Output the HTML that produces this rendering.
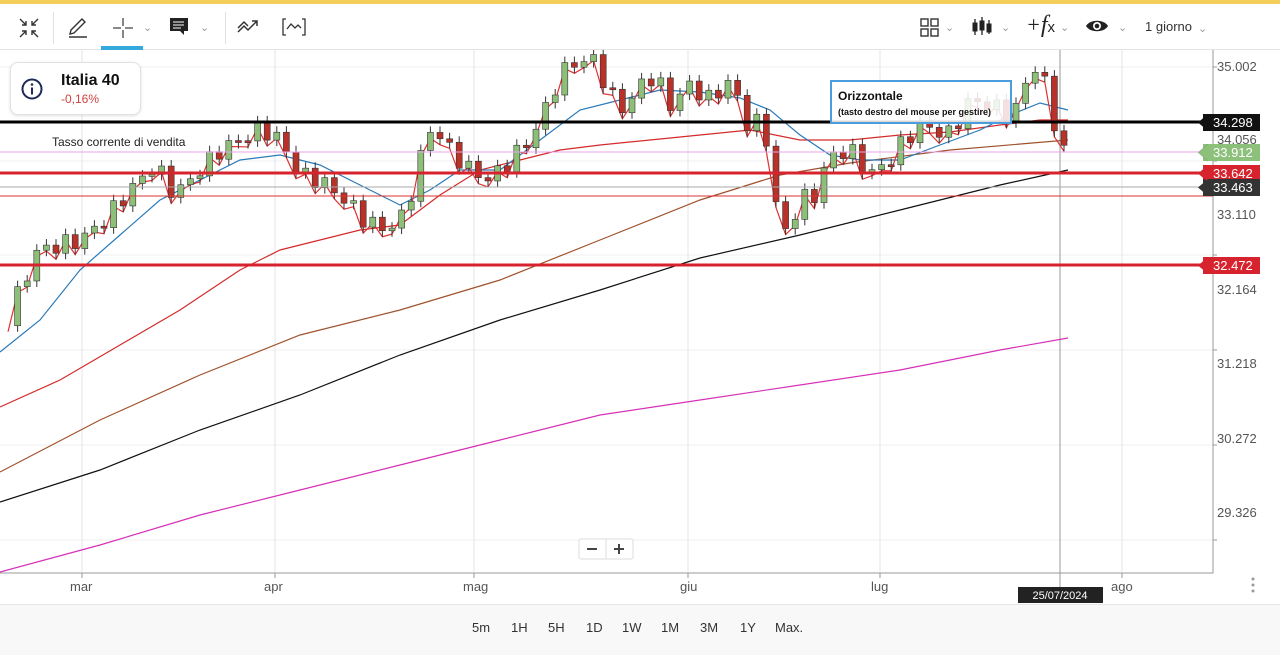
<!DOCTYPE html>
<html><head><meta charset="utf-8"><style>
body{margin:0;width:1280px;height:654px;overflow:hidden;background:#fff;font-family:"Liberation Sans",sans-serif;position:relative}
.top{position:absolute;left:0;top:0;width:1280px;height:4px;background:#f3cf5a}
.tb{position:absolute;top:4px;left:0;width:1280px;height:45px;border-bottom:1px solid #e4e4e4}
.abs{position:absolute}
.chev{position:absolute;color:#999;font-size:11px}
.card{position:absolute;left:10px;top:62px;width:129px;height:51px;border:1px solid #e2e2e2;border-radius:8px;background:#fff;box-shadow:0 1px 3px rgba(0,0,0,.12)}
.tag{position:absolute;right:20px;height:17px;color:#fff;font-size:13px;line-height:17px;padding-left:10px;width:47px}
.bot{position:absolute;top:604px;left:0;width:1280px;height:50px;background:#f8f8f8;border-top:1px solid #e6e6e6}
.bot span{position:absolute;top:15px;font-size:13px;color:#333}
</style></head><body>
<div class="top"></div>
<div class="tb">
<svg class="abs" style="left:18px;top:13px" width="22" height="22" viewBox="0 0 22 22" fill="none" stroke="#333" stroke-width="1.4"><path d="M2 2l6 6M8 4v4H4M20 2l-6 6M14 4v4h4M2 20l6-6M4 14h4v4M20 20l-6-6M18 14h-4v4"/></svg>
<div class="abs" style="left:53px;top:8px;width:1px;height:32px;background:#e0e0e0"></div>
<svg class="abs" style="left:67px;top:13px" width="22" height="22" viewBox="0 0 22 22" fill="none" stroke="#333" stroke-width="1.4"><path d="M3 17l1-4L15 2l3 3L7 16zM2 20h18"/></svg>
<svg class="abs" style="left:112px;top:13px" width="22" height="22" viewBox="0 0 22 22" stroke="#444" stroke-width="1.3"><path d="M11 1v8M11 13v8M1 11h8M13 11h8"/></svg>
<span class="chev" style="left:143px;top:17px">⌄</span>
<div class="abs" style="left:101px;top:42px;width:42px;height:4px;background:#36a9dc"></div>
<svg class="abs" style="left:170px;top:14px" width="20" height="18" viewBox="0 0 20 18"><path d="M0 0h18v13H14v4l-4-4H0z" fill="#222"/><path d="M3 4h11M3 7h11M3 10h8" stroke="#fff" stroke-width="1"/></svg>
<span class="chev" style="left:200px;top:17px">⌄</span>
<div class="abs" style="left:225px;top:8px;width:1px;height:32px;background:#e0e0e0"></div>
<svg class="abs" style="left:237px;top:15px" width="22" height="16" viewBox="0 0 22 16" fill="none" stroke="#333" stroke-width="1.5"><path d="M1 13l6-6 4 4 9-9M15 2h5v5M1 9l6-6 4 4"/></svg>
<svg class="abs" style="left:282px;top:13px" width="24" height="20" viewBox="0 0 24 20" fill="none" stroke="#333" stroke-width="1.3"><path d="M4 2H1v16h3M20 2h3v16h-3M5 12l4-5 4 4 3-3 3 3"/></svg>
<svg class="abs" style="left:920px;top:14px" width="20" height="20" viewBox="0 0 20 20" fill="none" stroke="#333" stroke-width="1.4"><rect x="1" y="1" width="7" height="7"/><rect x="11" y="1" width="7" height="7"/><rect x="1" y="11" width="7" height="7"/><rect x="11" y="11" width="7" height="7"/></svg>
<span class="chev" style="left:945px;top:17px">⌄</span>
<svg class="abs" style="left:972px;top:12px" width="22" height="22" viewBox="0 0 22 22" stroke="#222" fill="#222"><path d="M3 3v16M10 1v18M17 4v14" stroke-width="1.3"/><rect x="1" y="7" width="4" height="8"/><rect x="8" y="5" width="4" height="9"/><rect x="15" y="8" width="4" height="8"/></svg>
<span class="chev" style="left:1001px;top:17px">⌄</span>
<span class="abs" style="left:1026px;top:8px;font-family:'Liberation Serif',serif;font-style:italic;font-size:22px;color:#222">+<span style="font-size:24px">f</span><span style="font-style:normal;font-family:'Liberation Sans';font-size:15px">x</span></span>
<span class="chev" style="left:1060px;top:17px">⌄</span>
<svg class="abs" style="left:1085px;top:14px" width="24" height="16" viewBox="0 0 24 16"><path d="M1 8C5 1 19 1 23 8C19 15 5 15 1 8z" fill="#222"/><circle cx="12" cy="8" r="4" fill="#fff"/><circle cx="12" cy="8" r="2.3" fill="#222"/></svg>
<span class="chev" style="left:1118px;top:17px">⌄</span>
<span class="abs" style="left:1145px;top:15px;font-size:13px;color:#333">1 giorno</span>
<span class="chev" style="left:1198px;top:18px">⌄</span>
</div>

<svg class="abs" style="left:0;top:50px" width="1280" height="554" id="ch">
<g stroke="#efefef" stroke-width="1">
<path d="M0 17H1213M0 111H1213M0 205H1213M0 300H1213M0 395H1213M0 490H1213"/>
<path d="M82 0V522M275 0V522M474 0V522M688 0V522M880 0V522M1122 0V522" stroke="#e6e6e6"/>
</g>
<path d="M1213 0V523H0" stroke="#999" fill="none"/>
<g stroke="#999"><path d="M82 523v5M275 523v5M474 523v5M688 523v5M880 523v5M1122 523v5M1213 17h4M1213 111h4M1213 205h4M1213 300h4M1213 395h4M1213 490h4"/></g>
<path d="M1060 0V550" stroke="#999"/>
<g id="ma" fill="none" stroke-width="1.2"></g>
<g id="cd"></g>
<path d="M0 102H1213" stroke="#e9a4e9" stroke-width="1"/>
<path d="M0 137H1213" stroke="#aaa" stroke-width="1"/>
<path d="M0 146H1213" stroke="#d33" stroke-width="1"/>
<path d="M0 72H1213" stroke="#000" stroke-width="3"/>
<path d="M0 123H1213" stroke="#d7232e" stroke-width="3"/>
<path d="M0 215H1213" stroke="#d7232e" stroke-width="3"/>
<text x="52" y="96" font-size="12" fill="#222" font-family="Liberation Sans">Tasso corrente di vendita</text>
<rect x="831" y="31" width="180" height="42" fill="rgba(255,255,255,.85)" stroke="#4a9ee0" stroke-width="2"/>
<text x="838" y="50" font-size="12" font-weight="bold" fill="#111" font-family="Liberation Sans">Orizzontale</text>
<text x="838" y="65" font-size="9" font-weight="bold" fill="#111" font-family="Liberation Sans">(tasto destro del mouse per gestire)</text>
<g font-family="Liberation Sans" font-size="13" fill="#555">
<text x="1217" y="21">35.002</text><text x="1217" y="94">34.056</text><text x="1217" y="169">33.110</text><text x="1217" y="244">32.164</text><text x="1217" y="318">31.218</text><text x="1217" y="393">30.272</text><text x="1217" y="467">29.326</text>
<text x="70" y="541">mar</text><text x="264" y="541">apr</text><text x="463" y="541">mag</text><text x="680" y="541">giu</text><text x="871" y="541">lug</text><text x="1111" y="541">ago</text>
</g>
<rect x="1018" y="537" width="85" height="16" fill="#222"/>
<text x="1060" y="549" font-size="11" fill="#fff" text-anchor="middle" font-family="Liberation Sans">25/07/2024</text>
<g fill="#999"><circle cx="1253" cy="529" r="1.5"/><circle cx="1253" cy="535" r="1.5"/><circle cx="1253" cy="541" r="1.5"/></g>
<rect x="579" y="489" width="54" height="20" rx="2" fill="#fff" stroke="#ddd"/>
<path d="M606 489v20" stroke="#ddd"/>
<path d="M587 499h10M614 499h10M619 494v10" stroke="#444" stroke-width="2"/>
</svg>

<div class="tag" style="top:114px;background:#111">34.298</div>
<div class="tag" style="top:144px;background:#8dc07b">33.912</div>
<div class="tag" style="top:165px;background:#d7232e">33.642</div>
<div class="tag" style="top:179px;background:#333">33.463</div>
<div class="tag" style="top:257px;background:#d7232e">32.472</div>
<svg class="abs" style="left:1196px;top:114px" width="12" height="160"><path d="M12 0L2 8.5 12 17zM12 30L2 38.5 12 47z" fill="#111"/><path d="M12 30L2 38.5 12 47z" fill="#8dc07b"/><path d="M12 51L2 59.5 12 68z" fill="#d7232e"/><path d="M12 65L2 73.5 12 82z" fill="#333"/><path d="M12 143L2 151.5 12 160z" fill="#d7232e"/></svg>

<div class="card">
<svg class="abs" style="left:10px;top:15px" width="22" height="22" viewBox="0 0 22 22"><circle cx="11" cy="11" r="9.5" fill="none" stroke="#1c2a5c" stroke-width="2"/><circle cx="11" cy="6.5" r="1.3" fill="#1c2a5c"/><path d="M11 9.5v7" stroke="#1c2a5c" stroke-width="2"/></svg>
<div class="abs" style="left:50px;top:9px;font-size:16px;font-weight:bold;color:#111">Italia 40</div>
<div class="abs" style="left:50px;top:29px;font-size:12px;color:#d0413b">-0,16%</div>
</div>

<div class="bot">
<span style="left:472px">5m</span><span style="left:511px">1H</span><span style="left:548px">5H</span><span style="left:586px">1D</span><span style="left:622px">1W</span><span style="left:661px">1M</span><span style="left:700px">3M</span><span style="left:740px">1Y</span><span style="left:775px">Max.</span>
</div>
<script>
const ns="http://www.w3.org/2000/svg",O=-50;
function pl(pts,c,w){const p=document.createElementNS(ns,"polyline");p.setAttribute("points",pts.map(a=>a[0]+","+(a[1]+O)).join(" "));p.setAttribute("stroke",c);p.setAttribute("stroke-width",w||1.2);document.getElementById("ma").appendChild(p);}
pl([[0,572],[100,545],[200,515],[300,490],[400,465],[500,440],[600,415],[700,400],[800,385],[900,370],[1000,350],[1068,338]],"#d630b8");
pl([[0,502],[100,470],[200,430],[300,395],[400,355],[500,320],[600,290],[700,258],[800,235],[900,210],[1000,185],[1068,170]],"#111");
pl([[0,472],[100,420],[200,375],[300,335],[400,310],[500,280],[600,240],[700,200],[780,175],[850,163],[950,150],[1068,140]],"#a0522d");
pl([[0,407],[60,380],[120,345],[180,310],[240,270],[280,250],[320,240],[360,230],[400,225],[440,195],[480,170],[520,160],[560,150],[600,145],[650,140],[700,135],[750,130],[800,140],[850,140],[900,135],[950,132],[1000,125],[1040,120],[1068,120]],"#d42a2a");
pl([[0,352],[40,320],[80,270],[120,235],[160,200],[200,180],[240,160],[280,155],[320,165],[360,185],[400,205],[430,190],[460,170],[500,170],[540,140],[580,110],[620,100],[660,90],[700,92],[740,98],[770,110],[800,135],[830,155],[860,160],[900,160],[940,145],[980,130],[1010,115],[1040,103],[1068,110]],"#2a7ab8");
const k=[[8,318],[20,290],[38,250],[60,245],[80,240],[105,220],[130,190],[155,165],[175,195],[200,170],[220,150],[240,140],[262,128],[280,140],[300,175],[320,180],[345,200],[365,220],[385,230],[405,215],[420,160],[432,125],[450,150],[470,170],[490,180],[510,160],[530,140],[545,110],[560,75],[575,62],[595,60],[610,95],[625,110],[640,85],[655,75],[670,105],[690,85],[710,100],[730,80],[750,130],[760,120],[770,150],[780,240],[790,225],[800,200],[815,195],[830,155],[850,150],[870,175],[890,160],[905,140],[920,125],[935,130],[950,135],[970,100],[990,105],[1010,115],[1020,105],[1030,65],[1040,70],[1050,100],[1060,150],[1068,153]];
// interpolate closes per day
let pts=[];for(let x=8;x<=1068;x+=9.6){let i=0;while(i<k.length-2&&k[i+1][0]<x)i++;const a=k[i],b=k[i+1];const t=Math.min(1,Math.max(0,(x-a[0])/(b[0]-a[0])));pts.push([x,a[1]+(b[1]-a[1])*t+Math.sin(x*1.7)*9]);}
pl(pts.map(p=>[p[0],p[1]+6]),"#e03030");
const g=document.getElementById("cd");
for(let i=1;i<pts.length;i++){const x=pts[i][0],o=pts[i-1][1],c=pts[i][1];const up=c<o;const top=Math.min(o,c),h=Math.max(2,Math.abs(o-c));
const l=document.createElementNS(ns,"path");l.setAttribute("d",`M${x} ${top-6+O}V${top+h+6+O}`);l.setAttribute("stroke","#333");g.appendChild(l);
const r=document.createElementNS(ns,"rect");r.setAttribute("x",x-3);r.setAttribute("y",top+O);r.setAttribute("width",6);r.setAttribute("height",h);r.setAttribute("fill",up?"#8dbf78":"#b8322a");r.setAttribute("stroke","#333");r.setAttribute("stroke-width",.6);g.appendChild(r);}
</script>
</body></html>
